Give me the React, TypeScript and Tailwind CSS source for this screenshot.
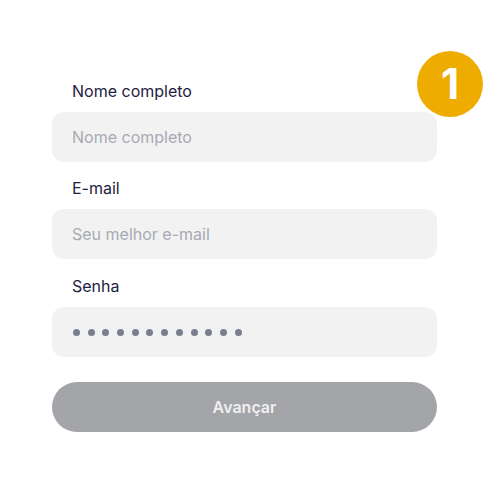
import React from 'react';

const fields = [
  { label: 'Nome completo', placeholder: 'Nome completo', gap: 'mb-[16px]' },
  { label: 'E-mail', placeholder: 'Seu melhor e-mail', gap: 'mb-[17px]' },
];

const App: React.FC = () => {
  return (
    <div
      className="relative w-[500px] h-[500px] bg-white"
      style={{ fontFamily: 'Inter, "Open Sans", sans-serif' }}
    >
      {/* step badge */}
      <div className="absolute left-[417px] top-[51px] w-[66px] h-[66px] rounded-full bg-[#eeac00] flex items-center justify-center">
        <span className="text-white text-[42px] font-bold leading-none">1</span>
      </div>

      <div className="pt-[81px] pl-[52px] w-[437px] flex flex-col">
        {fields.map(f => (
          <div key={f.label} className={`flex flex-col ${f.gap}`}>
            <label className="pl-[20px] h-[20px] leading-[20px] text-[16px] text-[#1e2240] mb-[11px]">
              {f.label}
            </label>
            <div className="h-[50px] rounded-[12px] bg-[#f2f2f2] flex items-center pl-[20px] text-[16px] text-[#a9a9b3]">
              {f.placeholder}
            </div>
          </div>
        ))}

        <div className="flex flex-col">
          <label className="pl-[20px] h-[20px] leading-[20px] text-[16px] text-[#1e2240] mb-[11px]">
            Senha
          </label>
          <div className="h-[50px] rounded-[12px] bg-[#f2f2f2] flex items-center pl-[21px] gap-[7.7px]">
            {Array.from({ length: 12 }).map((_, i) => (
              <span key={i} className="w-[7px] h-[7px] rounded-full bg-[#7b7e8f]" />
            ))}
          </div>
        </div>

        <button className="mt-[25px] h-[50px] rounded-full bg-[#a4a5a9] text-[#f0f0f0] text-[16px] font-semibold">
          Avançar
        </button>
      </div>
    </div>
  );
};

export default App;
